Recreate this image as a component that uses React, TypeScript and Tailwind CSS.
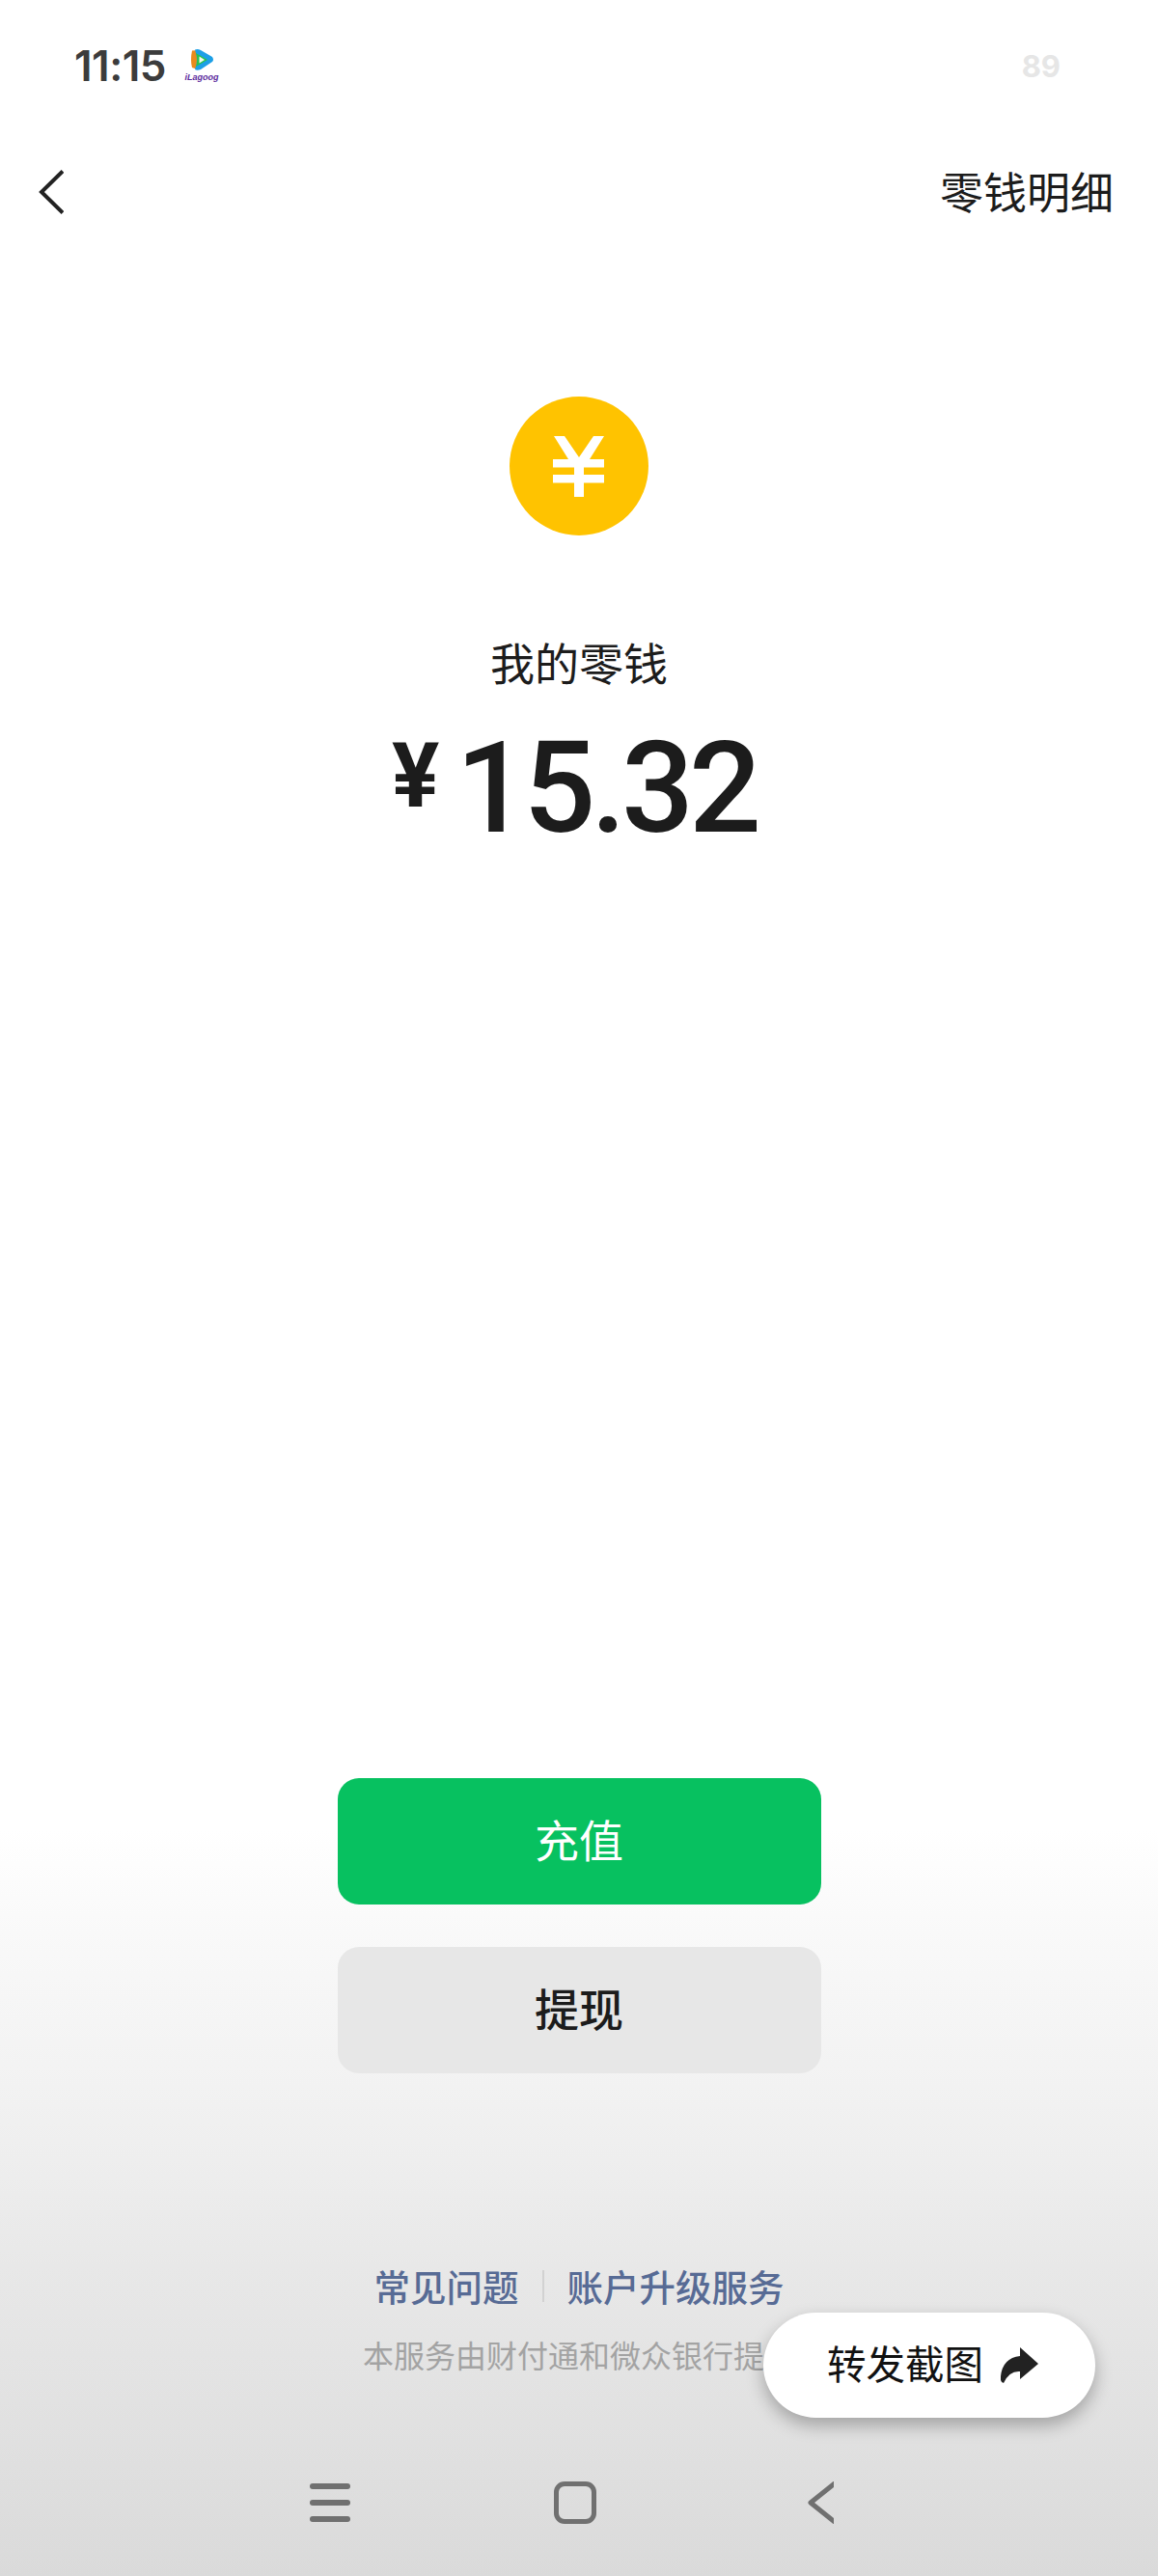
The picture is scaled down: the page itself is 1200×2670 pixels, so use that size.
import React from "react";

const cjk = { fontFamily: '"Noto Sans CJK SC", "Noto Sans", sans-serif' };

function AppBadge() {
  return (
    <div className="ml-[20px] flex w-[34px] flex-col items-center">
      <svg width="26" height="23" viewBox="0 0 26 23">
        <path d="M3 1.5 L10 1 L9 21 L3 19 Q1 11 3 1.5Z" fill="#e98a1c" />
        <path d="M6 0.5 Q9 -0.5 12 1 L24 8 Q26 11 24 13 L12 21 Q8 22.5 6 21 Q10 11 6 0.5Z" fill="#1c9fe6" />
        <path d="M7 4 L19 11 L7 18 Q9.5 11 7 4Z" fill="#27c24c" />
        <path d="M10.5 7.5 L16 11 L10.5 14.5Z" fill="#f4f9f2" />
      </svg>
      <span className="mt-[1px] whitespace-nowrap text-[9px] leading-[11px] font-bold italic text-[#5b2a9d]" style={{ fontFamily: '"Liberation Sans", sans-serif' }}>
        iLagoog
      </span>
    </div>
  );
}

function Coin() {
  return (
    <div className="flex h-[144px] w-[144px] items-center justify-center rounded-full bg-[#ffc300]">
      <svg width="54" height="63" viewBox="0 0 54 63" fill="#ffffff">
        <polygon points="1,0 12,0 27,22 42,0 53,0 38,24 32,24 22,24 16,24" />
        <rect x="0" y="24" width="53" height="8.5" />
        <rect x="0" y="40" width="53" height="8.5" />
        <rect x="22" y="24" width="10" height="39" />
      </svg>
    </div>
  );
}

export default function App() {
  return (
    <div
      className="relative flex h-[2670px] w-[1200px] flex-col overflow-hidden bg-[linear-gradient(180deg,#ffffff_0%,#ffffff_71%,#f9f9f9_75%,#f2f2f2_81%,#e8e8e8_88%,#e1e1e1_94%,#dadada_100%)]"
      style={cjk}
    >
      <div className="flex h-[136px] items-center pl-[77px] pr-[101px]">
        <span className="text-[44px] leading-none font-semibold tracking-[-0.5px] text-[#3c3c3c]" style={{ fontFamily: "Inter, sans-serif" }}>
          11:15
        </span>
        <AppBadge />
        <span className="ml-auto text-[31px] leading-none font-bold text-[#e6e6e6]" style={{ fontFamily: "Inter, sans-serif" }}>
          89
        </span>
      </div>

      <div className="flex h-[126px] items-center justify-between pl-[40px] pr-[46px]">
        <svg width="26" height="46" viewBox="0 0 26 46" fill="none" stroke="#222222" strokeWidth="4">
          <path d="M25 1.5 L3 23 L25 44.5" />
        </svg>
        <span className="-translate-y-[1px] text-[45px] leading-[60px] text-[#1c1c1c]">零钱明细</span>
      </div>

      <div className="mt-[149px] flex flex-col items-center">
        <Coin />
        <div className="mt-[100px] mb-[3px] text-[46px] leading-[60px] text-[#1c1c1c]">我的零钱</div>
        <div className="mt-[34px] mr-[10px] flex h-[130px] items-center text-[#1c1c1c]">
          <span className="mb-[24px] text-[92px] leading-none font-bold" style={{ fontFamily: "Roboto, sans-serif" }}>¥</span>
          <span className="ml-[17px] text-[132px] leading-none font-medium tracking-[-5px]" style={{ fontFamily: "Roboto, sans-serif" }}>15.32</span>
        </div>
      </div>

      <div className="mt-[961px] flex flex-col items-center gap-[44px]">
        <button className="flex h-[131px] w-[501px] items-center justify-center rounded-[22px] bg-[#07c160] pb-[6px] text-[46px] font-normal text-white">
          充值
        </button>
        <button className="flex h-[131px] w-[501px] items-center justify-center rounded-[22px] bg-[#e7e7e7] pb-[6px] text-[46px] font-medium text-[#1c1c1c]">
          提现
        </button>
      </div>

      <div className="mt-[198px] mb-[1px] flex h-[44px] items-center justify-center text-[37.5px] font-medium leading-[44px] text-[#576b95]">
        <span>常见问题</span>
        <span className="mx-[24px] h-[33px] w-[2px] bg-[#d2d2d2]" />
        <span>账户升级服务</span>
      </div>
      <div className="mt-[26px] text-center text-[32px] leading-[44px] text-[#a3a3a3]">本服务由财付通和微众银行提供</div>

      <div className="mt-auto mb-[54px] flex h-[44px] items-center pl-[321px]">
        <div className="flex w-[42px] flex-col gap-[11px]">
          <div className="h-[6px] rounded-full bg-[#707070]" />
          <div className="h-[6px] rounded-full bg-[#707070]" />
          <div className="h-[6px] rounded-full bg-[#707070]" />
        </div>
        <div className="ml-[211px] h-[44px] w-[44px] rounded-[11px] border-[5px] border-[#707070]" />
        <svg className="ml-[219px]" width="27" height="44" viewBox="0 0 27 44" fill="none" stroke="#707070" strokeWidth="5" strokeLinecap="round" strokeLinejoin="round">
          <path d="M28 2 L3 22 L28 42" />
        </svg>
      </div>

      <div className="absolute left-[791px] top-[2397px] flex h-[109px] w-[344px] items-center rounded-full bg-white pl-[66px] shadow-[0_8px_18px_rgba(0,0,0,0.28)]">
        <span className="-translate-y-[2px] text-[40.5px] leading-none text-[#111111]">转发截图</span>
        <svg className="ml-[18px]" width="40" height="38" viewBox="0 0 40 38" fill="#222222">
          <path d="M20 0 L39 17 L20 33 L20 25 Q9 24 3 37 Q-1 36 0 30 Q2 11 20 9 Z" />
        </svg>
      </div>
    </div>
  );
}
